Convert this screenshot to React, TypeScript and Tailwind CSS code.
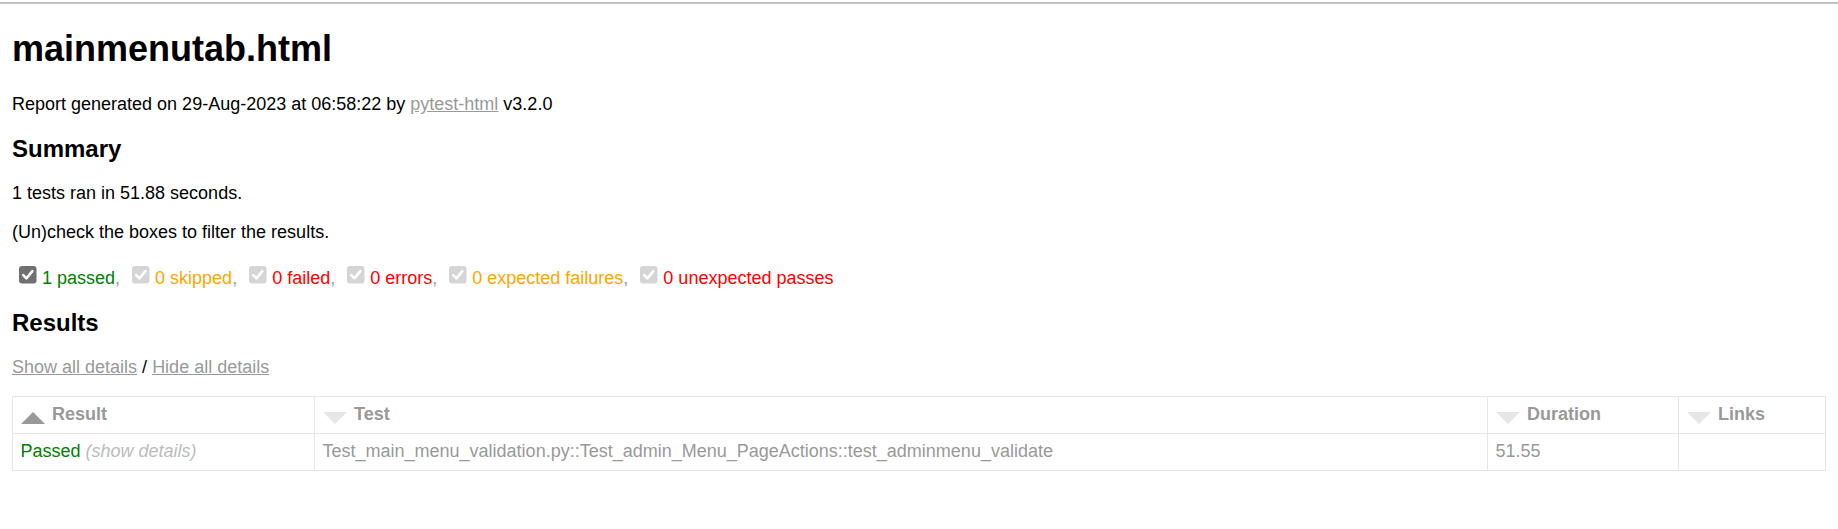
import React from "react";

function Box({ disabled }: { disabled?: boolean }) {
  return (
    <span className="inline-block w-[19.5px] h-[19.5px] ml-[6px] mr-[4.5px] mt-[3.5px] mb-[4.5px] align-[-4.5px]">
      <svg width="19.5" height="19.5" viewBox="0 0 19.5 19.5" className="block">
        <rect
          x="1"
          y="1"
          width="17.5"
          height="17.5"
          rx="3"
          fill={disabled ? "#d5d5d5" : "#707070"}
        />
        <path
          d="M5.2 10.2 L8.4 13.4 L14.4 6.2"
          fill="none"
          stroke="#ffffff"
          strokeWidth="2.6"
          strokeLinecap="round"
          strokeLinejoin="round"
        />
      </svg>
    </span>
  );
}

function SortIcon({ active }: { active?: boolean }) {
  return active ? (
    <div className="float-left w-0 h-0 mr-[7.5px] mt-[7.5px] border-l-[12px] border-r-[12px] border-l-transparent border-r-transparent border-b-[12px] border-b-[#999999]" />
  ) : (
    <div className="float-left w-0 h-0 mr-[7.5px] mt-[7.5px] border-l-[12px] border-r-[12px] border-l-transparent border-r-transparent border-t-[12px] border-t-[#e6e6e6]" />
  );
}

export default function App() {
  const filters: { label: string; color: string; disabled?: boolean }[] = [
    { label: "1 passed", color: "text-[#008000]" },
    { label: "0 skipped", color: "text-[#ffa500]", disabled: true },
    { label: "0 failed", color: "text-[#ff0000]", disabled: true },
    { label: "0 errors", color: "text-[#ff0000]", disabled: true },
    { label: "0 expected failures", color: "text-[#ffa500]", disabled: true },
    { label: "0 unexpected passes", color: "text-[#ff0000]", disabled: true },
  ];

  return (
    <div
      className="bg-white min-h-[529px] text-[#999999] text-[18px] leading-[normal]"
      style={{ fontFamily: '"Liberation Sans", Arial, Helvetica, sans-serif' }}
    >
      <div className="h-[4px] pt-[2px]">
        <div className="h-[1.5px] bg-[#c2c2c2]" />
      </div>
      <div className="mx-[12px]">
        <h1 className="text-[36px] font-bold text-black my-[24.12px] leading-[normal]">
          mainmenutab.html
        </h1>
        <p className="text-black my-[18px]">
          Report generated on 29-Aug-2023 at 06:58:22 by{" "}
          <a className="text-[#999999] underline" href="#">
            pytest-html
          </a>{" "}
          v3.2.0
        </p>
        <h2 className="text-[24px] font-bold text-black my-[19.92px] leading-[normal]">
          Summary
        </h2>
        <p className="text-black my-[18px]">1 tests ran in 51.88 seconds. </p>
        <p className="text-black my-[18px]">(Un)check the boxes to filter the results.</p>
        <div className="whitespace-pre">
          {filters.map((f, i) => (
            <React.Fragment key={f.label}>
              <Box disabled={f.disabled} />
              <span className={f.color}>{f.label}</span>
              {i < filters.length - 1 ? ", " : ""}
            </React.Fragment>
          ))}
        </div>
        <h2 className="text-[24px] font-bold text-black my-[19.92px] leading-[normal]">
          Results
        </h2>
        <p className="text-black my-[18px]">
          <a className="text-[#999999] underline" href="#">
            Show all details
          </a>{" "}
          /{" "}
          <a className="text-[#999999] underline" href="#">
            Hide all details
          </a>
        </p>
        <table className="w-full table-fixed border-collapse border border-[#e6e6e6] text-[#999999] text-[18px] mt-[18px]">
          <colgroup>
            <col className="w-[302px]" />
            <col className="w-[1173px]" />
            <col className="w-[191px]" />
            <col />
          </colgroup>
          <thead>
            <tr>
              <th className="p-[7.5px] border border-[#e6e6e6] text-left font-bold">
                <SortIcon active />
                Result
              </th>
              <th className="p-[7.5px] border border-[#e6e6e6] text-left font-bold">
                <SortIcon />
                Test
              </th>
              <th className="p-[7.5px] border border-[#e6e6e6] text-left font-bold">
                <SortIcon />
                Duration
              </th>
              <th className="p-[7.5px] border border-[#e6e6e6] text-left font-bold">
                <SortIcon />
                Links
              </th>
            </tr>
          </thead>
          <tbody>
            <tr>
              <td className="p-[7.5px] border border-[#e6e6e6] text-left">
                <span className="text-[#008000]">Passed</span>
                <span className="text-[#bbbbbb] italic"> (show details)</span>
              </td>
              <td className="p-[7.5px] border border-[#e6e6e6] text-left whitespace-nowrap">
                Test_main_menu_validation.py::Test_admin_Menu_PageActions::test_adminmenu_validate
              </td>
              <td className="p-[7.5px] border border-[#e6e6e6] text-left">51.55</td>
              <td className="p-[7.5px] border border-[#e6e6e6] text-left"></td>
            </tr>
          </tbody>
        </table>
      </div>
    </div>
  );
}
